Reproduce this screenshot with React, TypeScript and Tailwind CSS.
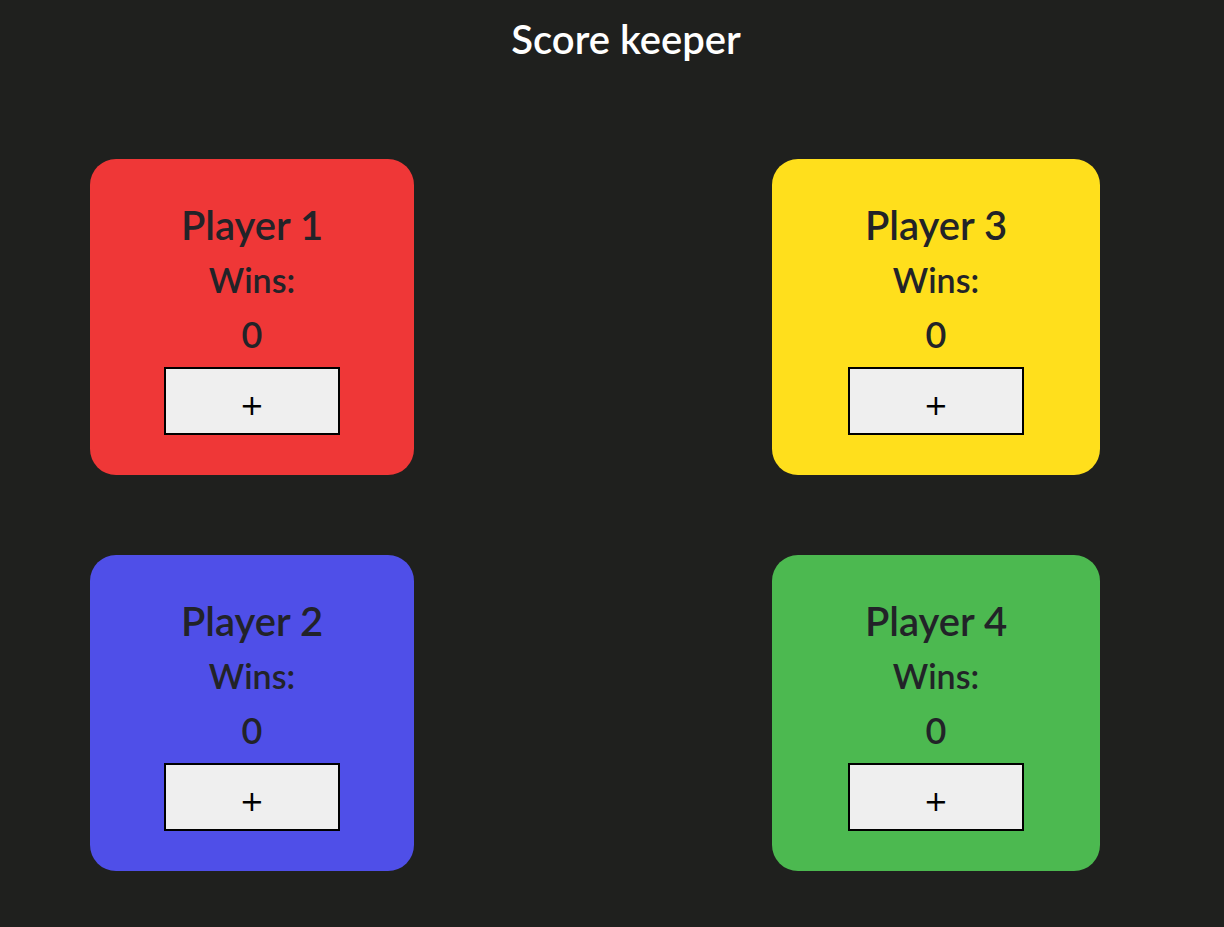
const players = [
  { name: 'Player 1', bg: 'bg-[#ef3737]', w: 'w-[324px]' },
  { name: 'Player 3', bg: 'bg-[#ffdf1c]', w: 'w-[328px]' },
  { name: 'Player 2', bg: 'bg-[#4f4fe8]', w: 'w-[324px]' },
  { name: 'Player 4', bg: 'bg-[#4cb950]', w: 'w-[328px]' },
];

function PlayerCard({ name, bg, w }: { name: string; bg: string; w: string }) {
  return (
    <div className={`${bg} ${w} h-[316px] rounded-[26px] flex flex-col items-center pt-[42px] text-[#222328]`}>
      <h2 className="text-[40px] leading-[48px] font-semibold">{name}</h2>
      <h3 className="mt-[10px] text-[34px] leading-[41px] font-semibold">Wins:</h3>
      <p className="mt-[13px] text-[36px] leading-[43px] font-semibold">0</p>
      <button className="mt-[11px] w-[176px] h-[68px] bg-[#efefef] border-2 border-black font-['DejaVu_Sans',sans-serif] text-[29px] leading-none text-black pt-[8px]">
        +
      </button>
    </div>
  );
}

export default function App() {
  return (
    <div className="min-h-[927px] bg-[#1f201e] font-['Lato','Open_Sans',sans-serif]">
      <h1 className="pt-[15px] pl-[28px] text-center text-[40px] leading-[48px] font-semibold text-white">
        Score keeper
      </h1>
      <div className="mt-[96px] pl-[90px] grid grid-cols-[324px_328px] gap-x-[358px] gap-y-[80px]">
        {players.map((p) => (
          <PlayerCard key={p.name} {...p} />
        ))}
      </div>
    </div>
  );
}
